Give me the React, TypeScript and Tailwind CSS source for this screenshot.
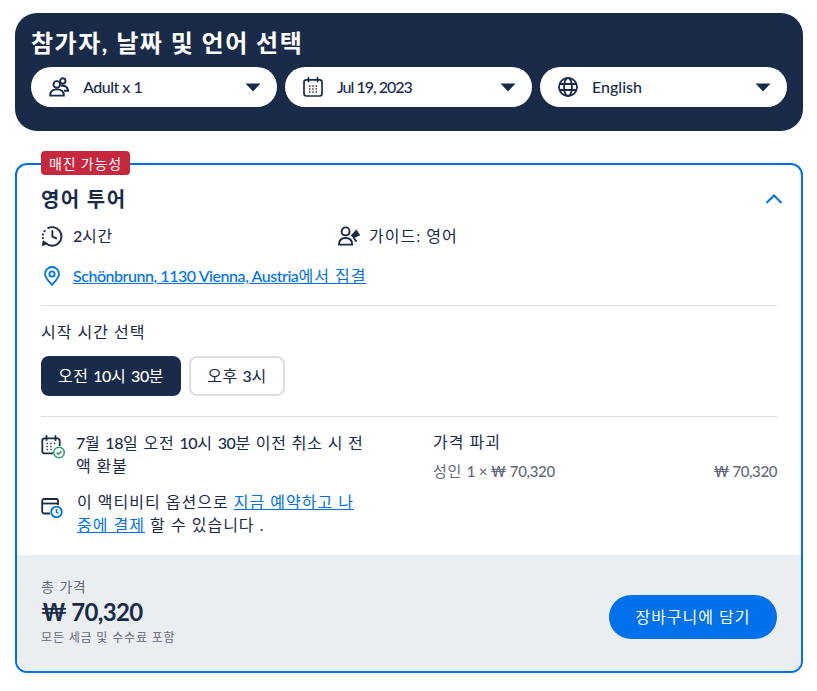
import React from "react";

function Caret() {
  return (
    <svg width="16" height="9" viewBox="0 0 16 9" className="shrink-0">
      <path d="M0.5 0.5H15.5L8 8.5Z" fill="#1a2b49" />
    </svg>
  );
}

function PeopleIcon() {
  return (
    <svg width="20" height="20" viewBox="0 0 20 20" fill="none" stroke="#1a2b49" strokeWidth="1.9">
      <circle cx="7.800" cy="7.400" r="3.300" />
      <circle cx="13.800" cy="4" r="2.700" />
      <path d="M1.200 18.600c0-4.200 2.600-6.200 6.800-6.200s6.800 2 6.800 6.200z" />
      <path d="M12.200 9c3.600-.8 6.600.8 7 4.800h-4.200" />
    </svg>
  );
}

function CalendarIcon() {
  return (
    <svg width="20" height="20" viewBox="0 0 20 20" fill="none" stroke="#1a2b49" strokeWidth="1.700">
      <rect x="1" y="2.800" width="18" height="16.200" rx="2.400" />
      <path d="M5.500 0.500v4M14.500 0.500v4" strokeLinecap="round" />
      <path d="M6 9h1.400M9.300 9h1.400M12.600 9h1.400M6 12h1.400M9.300 12h1.400M12.600 12h1.400M6 15h1.400M9.300 15h1.400M12.600 15h1.400" strokeWidth="1.400" />
    </svg>
  );
}

function GlobeIcon() {
  return (
    <svg width="20" height="20" viewBox="0 0 20 20" fill="none" stroke="#1a2b49" strokeWidth="1.800">
      <circle cx="10" cy="10" r="9" />
      <ellipse cx="10" cy="10" rx="4" ry="9" />
      <path d="M1.600 7h16.800M1.600 13h16.800" />
    </svg>
  );
}

function Select({ icon, label, className }: { icon: React.ReactNode; label: React.ReactNode; className: string }) {
  return (
    <div className={`flex h-10 items-center rounded-[20px] bg-white pl-[18px] pr-[16px] ${className}`}>
      <span className="flex w-5 shrink-0 items-center justify-center">{icon}</span>
      <span className="ml-[14px] flex-1 text-[16px] font-medium text-[#1a2b49]">{label}</span>
      <Caret />
    </div>
  );
}

function DurationIcon() {
  return (
    <svg width="22" height="22" viewBox="0 0 22 22" fill="none" stroke="#1a2b49" strokeWidth="1.900">
      <path d="M6.500 3.400A9.300 9.300 0 1 1 5.200 18.600" />
      <path d="M3.600 6.200v.01M1.900 9.600v.01M1.800 13v.01" strokeLinecap="round" strokeWidth="2.200" />
      <path d="M11.400 6v5.600l3.800 1.800" strokeLinecap="round" />
      <path d="M1.400 20.800l.6-5 4.400 2.600z" fill="#1a2b49" strokeWidth="0.800" />
    </svg>
  );
}

function GuideIcon() {
  return (
    <svg width="23" height="20" viewBox="0 0 23 20" fill="none" stroke="#1a2b49" strokeWidth="1.900">
      <circle cx="7.600" cy="5.400" r="4" />
      <path d="M1 18.600c0-4.600 2.600-6.600 6.600-6.600s6.600 2 6.600 6.600z" />
      <path d="M12.800 9.600l5.600-6 3.800 5.600-6.600 3z" fill="#1a2b49" stroke="none" />
      <path d="M15.600 12l3 3.600" />
    </svg>
  );
}

function PinIcon() {
  return (
    <svg width="16" height="20" viewBox="0 0 16 20" fill="none" stroke="#0071eb" strokeWidth="1.800">
      <path d="M8 19c-3.600-4-7-7.400-7-11a7 7 0 0 1 14 0c0 3.600-3.400 7-7 11z" />
      <circle cx="8" cy="8" r="2.600" />
    </svg>
  );
}

function CalendarCheckIcon() {
  return (
    <svg width="24" height="24" viewBox="0 0 24 24" fill="none">
      <g stroke="#1a2b49" strokeWidth="1.800">
        <path d="M12 18.400H3.400A2.100 2.100 0 0 1 1.300 16.300V5.500A2.100 2.100 0 0 1 3.400 3.400H16.600A2.100 2.100 0 0 1 18.700 5.500V11" />
        <path d="M5.500 1v4M14.500 1v4" strokeLinecap="round" />
        <path d="M5.500 8.500h1.300M9.300 8.500h1.300M13 8.500h1.300M5.500 11.500h1.300M9.300 11.500h1.300M5.500 14.500h1.300M9.300 14.500h1.300" strokeWidth="1.300" />
      </g>
      <circle cx="18" cy="17.500" r="5.300" fill="#fff" stroke="#2e9e6b" strokeWidth="1.500" />
      <path d="M15.600 17.500l1.800 1.800 3-3.400" stroke="#2e9e6b" strokeWidth="1.500" fill="none" />
    </svg>
  );
}

function WalletClockIcon() {
  return (
    <svg width="22" height="22" viewBox="0 0 22 22" fill="none">
      <g stroke="#1a2b49" strokeWidth="1.800">
        <path d="M9 16.500H3.200A2 2 0 0 1 1.200 14.500V4A2 2 0 0 1 3.200 2H15A2 2 0 0 1 17 4V8" />
        <path d="M1.200 6.500H17" />
      </g>
      <circle cx="15.500" cy="15" r="5.300" fill="#fff" stroke="#0071eb" strokeWidth="1.800" />
      <path d="M15.500 12v3.300l2 1" stroke="#0071eb" strokeWidth="1.500" fill="none" />
    </svg>
  );
}

function L({ children }: { children: React.ReactNode }) {
  return <span className="font-medium tracking-[-0.4px]">{children}</span>;
}

export default function App() {
  return (
    <div
      className="min-h-[691px] bg-white pl-[15px] pr-[14px] pt-[13px] text-[#1a2b49]"
      style={{ fontFamily: 'Lato, "Noto Sans CJK KR", sans-serif' }}
    >
      <div className="h-[118px] rounded-[22px] bg-[#1a2b49] px-4 pt-[14px]">
        <h1 className="text-[24px] font-bold leading-[32px] tracking-[1.5px] text-white">참가자, 날짜 및 언어 선택</h1>
        <div className="mt-[8px] flex gap-2">
          <Select className="w-[246px]" icon={<PeopleIcon />} label={<span className="tracking-[-0.5px]">Adult x 1</span>} />
          <Select className="w-[247px]" icon={<CalendarIcon />} label={<span className="tracking-[-1px]">Jul 19, 2023</span>} />
          <Select className="w-[247px]" icon={<GlobeIcon />} label="English" />
        </div>
      </div>

      <div className="relative mt-8 flex h-[510px] flex-col rounded-[12px] border-2 border-[#0071eb]">
        <div className="absolute left-6 top-[-14px] flex h-6 w-[89px] items-center justify-center rounded-[4px] bg-[#c7283d] text-[14px] tracking-[0.06em] text-white">
          매진 가능성
        </div>

        <div className="flex-1 px-6 pt-[22px]">
          <div className="flex h-6 items-center justify-between">
            <h2 className="text-[20px] font-bold tracking-[1.400px]">영어 투어</h2>
            <svg width="18" height="10" viewBox="0 0 18 10" fill="none" stroke="#0071eb" strokeWidth="2" className="mr-[-6px]">
              <path d="M1.500 9L9 1.500 16.500 9" />
            </svg>
          </div>

          <div className="mt-[13px] flex h-6 items-center text-[16px] tracking-[1px]">
            <div className="flex w-[297px] items-center">
              <DurationIcon />
              <span className="ml-[10px]"><L>2</L>시간</span>
            </div>
            <div className="flex items-center">
              <GuideIcon />
              <span className="ml-[8px]">가이드: 영어</span>
            </div>
          </div>

          <div className="mt-4 flex h-6 items-center text-[16px]">
            <span className="ml-[3px] flex w-4 items-center"><PinIcon /></span>
            <a className="ml-[13px] text-[#0071eb] underline tracking-[1px]">
              <span className="font-medium tracking-[-0.45px]">Schönbrunn, 1130 Vienna, Austria</span>에서 집결
            </a>
          </div>

          <div className="mt-[17px] border-t border-[#dcdfe4]" />

          <div className="mt-[14px] text-[16px] leading-6 tracking-[1px]">시작 시간 선택</div>

          <div className="mt-3 flex gap-2">
            <div className="flex h-10 w-[140px] items-center justify-center rounded-[8px] bg-[#1a2b49] text-[16px] tracking-[0.6px] text-white">
              <span>오전 <L>10</L>시 <L>30</L>분</span>
            </div>
            <div className="flex h-10 w-[96px] items-center justify-center rounded-[8px] border-2 border-[#dcdfe4] bg-white text-[16px] tracking-[0.6px]">
              <span>오후 <L>3</L>시</span>
            </div>
          </div>

          <div className="mt-[20px] border-t border-[#dcdfe4]" />

          <div className="mt-[14px] flex">
            <div className="w-[392px]">
              <div className="flex">
                <span className="mt-[4px] w-[35px] shrink-0"><CalendarCheckIcon /></span>
                <p className="w-[292px] text-[16px] leading-[23px] tracking-[0.8px]">
                  <L>7</L>월 <L>18</L>일 오전 <L>10</L>시 <L>30</L>분 이전 취소 시 전액 환불
                </p>
              </div>
              <div className="mt-[13px] flex">
                <span className="mt-[7px] w-[36px] shrink-0"><WalletClockIcon /></span>
                <p className="w-[286px] text-[16px] leading-[23px] tracking-[1px]">
                  이 액티비티 옵션으로 <a className="text-[#0071eb] underline">지금 예약하고 나중에 결제</a> 할 수 있습니다 .
                </p>
              </div>
            </div>
            <div className="flex-1">
              <div className="text-[16px] leading-[22px] tracking-[1px]">가격 파괴</div>
              <div className="mt-[6px] flex justify-between text-[15px] leading-6 text-[#63687a]">
                <span className="tracking-[0.8px]">성인 <span className="font-medium tracking-[-0.3px]">1 × ₩ 70,320</span></span>
                <span className="font-medium tracking-[-0.4px]">₩ 70,320</span>
              </div>
            </div>
          </div>
        </div>

        <div className="flex h-[116px] items-center justify-between rounded-b-[10px] bg-[#ebeef1] px-6">
          <div className="mb-1">
            <div className="text-[14px] leading-5 tracking-[0.06em] text-[#63687a]">총 가격</div>
            <div className="text-[24px] font-bold leading-[30px] tracking-[-0.7px]">₩ 70,320</div>
            <div className="mt-[3px] text-[12px] leading-4 tracking-[0.07em] text-[#63687a]">모든 세금 및 수수료 포함</div>
          </div>
          <div className="mt-2 flex h-11 w-[168px] items-center justify-center rounded-[22px] bg-[#0071eb] text-[16px] tracking-[1px] text-white">
            장바구니에 담기
          </div>
        </div>
      </div>
    </div>
  );
}
